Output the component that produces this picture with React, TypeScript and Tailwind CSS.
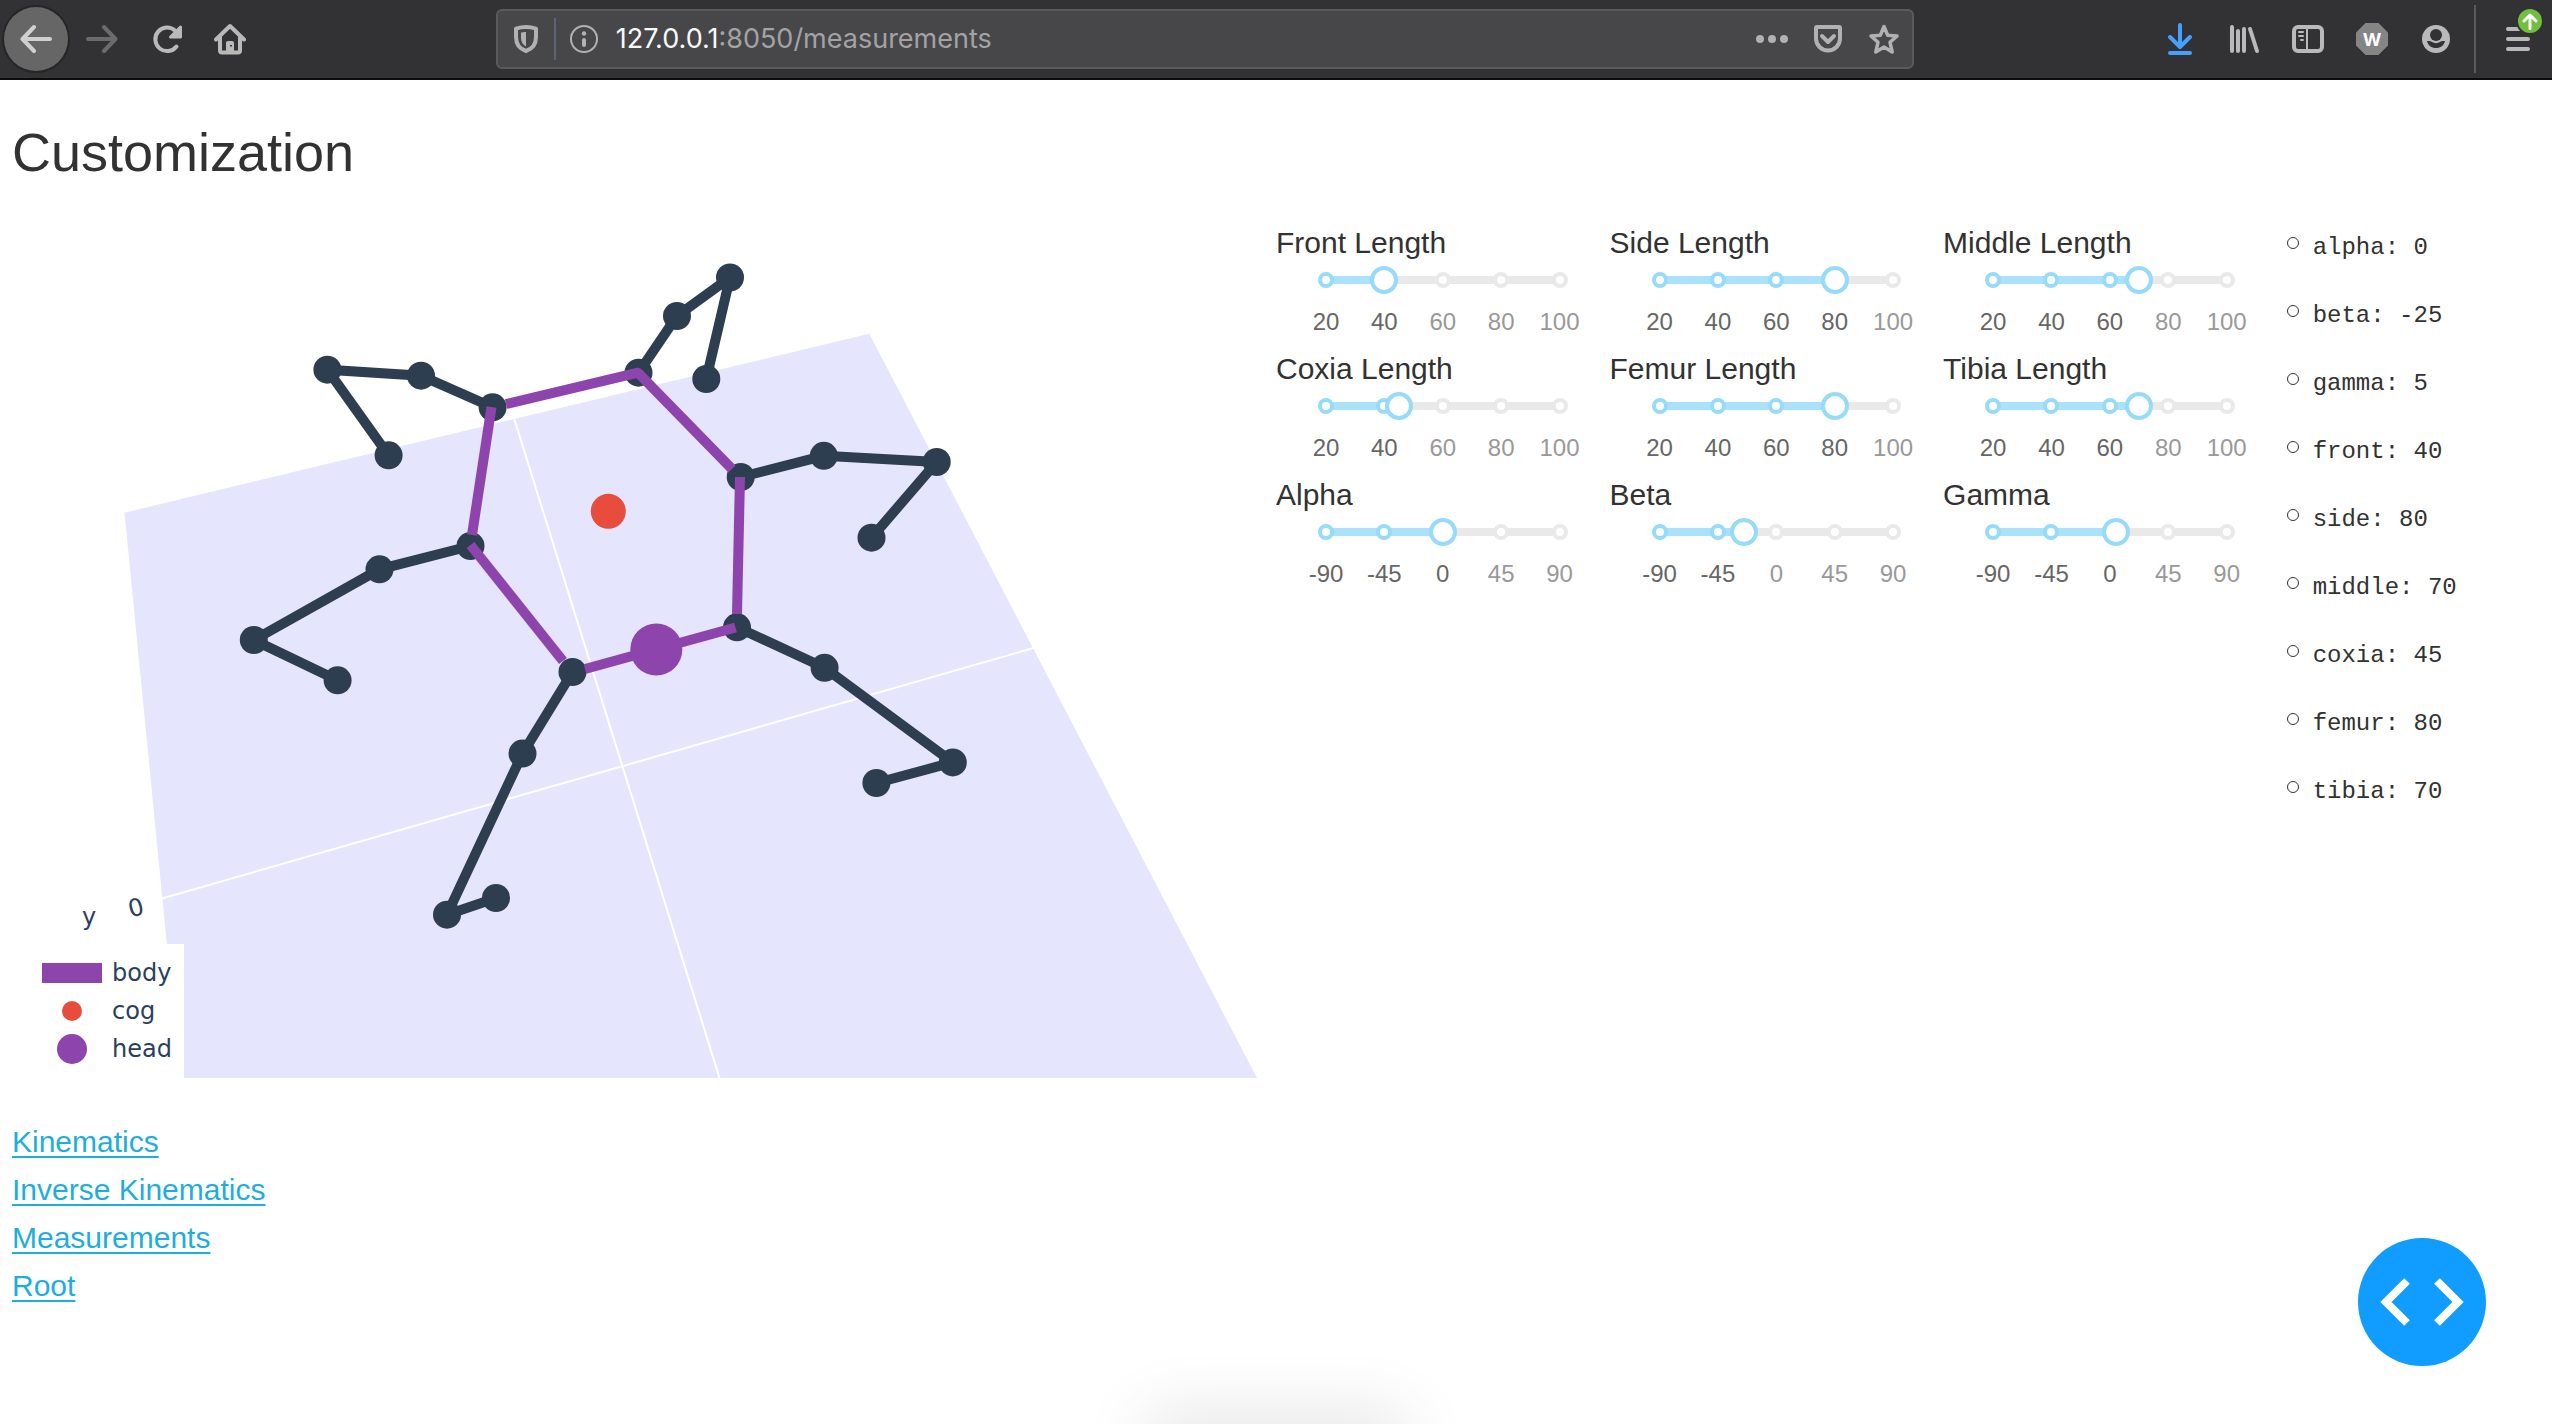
import { useState } from "react";
import type { ReactNode } from "react";

type Point = [number, number];

const NAVY = "#2c3e50";
const PURPLE = "#8e44ad";

function Icon({ children }: { children: ReactNode }) {
  return (
    <svg
      viewBox="0 0 32 32"
      className="size-8 shrink-0"
      fill="none"
      stroke="currentColor"
      strokeWidth={4}
      strokeLinecap="round"
      strokeLinejoin="round"
      aria-hidden="true"
    >
      {children}
    </svg>
  );
}

function ToolButton({ label, children, className = "" }: { label: string; children: ReactNode; className?: string }) {
  return (
    <button type="button" aria-label={label} className={`flex size-16 shrink-0 items-center justify-center ${className}`}>
      <Icon>{children}</Icon>
    </button>
  );
}

function Toolbar() {
  return (
    <header className="flex h-20 items-center border-b-2 border-[#0c0c0d] bg-[#323234] pr-0.5 pl-1 text-[#b9b9ba]">
      <nav aria-label="Browser" className="flex items-center gap-0.5">
        <ToolButton label="Back" className="rounded-full bg-[#666667] text-[#d0d0d0] ring-2 ring-[#262627]">
          <path d="M30 16H3M14 4 2.500 16 14 28" />
        </ToolButton>
        <ToolButton label="Forward" className="text-[#6b6b6d]">
          <path d="M2 16h27M18 4l11.500 12L18 28" />
        </ToolButton>
        <ToolButton label="Reload">
          <path d="M24.500 23.500A11.800 11.800 0 1 1 23 7.500" />
          <path d="M28.500 4v10H18.500z" fill="currentColor" strokeWidth={3} />
        </ToolButton>
        <ToolButton label="Home" className="-ml-1">
          <path d="M2 16.500 16 3l14 13.500" />
          <path d="M6 14v13.500a2 2 0 0 0 2 2h16a2 2 0 0 0 2-2V14" />
          <path d="M12 29V20a2 2 0 0 1 2-2h4a2 2 0 0 1 2 2v9z" fill="currentColor" stroke="none" />
          <path d="M17 22v1.500" stroke="#323234" strokeWidth={2} strokeLinecap="butt" />
        </ToolButton>
      </nav>

      <div className="flex-1" />
      <div className="flex h-15 flex-[6] items-center rounded-md border-2 border-[#5a5a5c] bg-[#474749] pr-3 text-[#b1b1b3]">
        <button type="button" aria-label="Tracking protection" className="ml-3">
          <Icon>
            <path d="M16 4c4 0 7 .6 10 1.600V14c0 8-4 12-10 14C10 26 6 22 6 14V5.600C9 4.600 12 4 16 4z" />
            <path d="M16 9c-2 0-4 .3-5 .6V15c0 4 2 7 5 8.500z" fill="currentColor" stroke="none" />
          </Icon>
        </button>
        <span className="ml-3 h-[42px] w-0.5 bg-[#5d6270]" />
        <button type="button" aria-label="Site information" className="ml-3">
          <Icon>
            <circle cx="16" cy="16" r="13" strokeWidth={2} />
            <circle cx="16" cy="10.500" r="2.200" fill="currentColor" stroke="none" />
            <path d="M16 17v5" />
          </Icon>
        </button>
        <div
          role="textbox"
          aria-label="Address"
          contentEditable
          suppressContentEditableWarning
          className="ml-4 flex-1 font-['Inter',sans-serif] text-[27px] leading-10 whitespace-nowrap text-[#a3a3a5] outline-none"
        >
          <span className="text-[#f9f9fa]">127.0.0.1</span>:8050/measurements
        </div>
        <div className="flex items-center gap-6">
          <button type="button" aria-label="Page actions">
            <Icon>
              <g fill="currentColor" stroke="none">
                <circle cx="4" cy="16" r="4" />
                <circle cx="16" cy="16" r="4" />
                <circle cx="28" cy="16" r="4" />
              </g>
            </Icon>
          </button>
          <button type="button" aria-label="Save to Pocket">
            <Icon>
              <path d="M5 4h22a1 1 0 0 1 1 1v10.500a12 12 0 0 1-24 0V5a1 1 0 0 1 1-1z" />
              <path d="m10 13 6 6 6-6" />
            </Icon>
          </button>
          <button type="button" aria-label="Bookmark">
            <Icon>
              <path
                d="m16 3.500 3.700 8.700 9.300.8-7 6.300 2.200 9.700L16 24l-8.200 5L10 19.300 3 13l9.300-.8z"
                strokeWidth={3.5}
              />
            </Icon>
          </button>
        </div>
      </div>
      <div className="flex-1" />

      <div className="flex items-center">
        <ToolButton label="Downloads" className="text-[#45a1ff]">
          <path d="M16 2v22M6 14l10 10 10-10M6 30h20" />
        </ToolButton>
        <ToolButton label="Library">
          <path d="M4 4v24M10 8v20M16 6v22M22 6l7 22" />
        </ToolButton>
        <ToolButton label="Sidebar">
          <rect x="2" y="4" width="28" height="24" rx="4" />
          <path d="M15 4v24M7 9h4M7 13h4M9 17h2" strokeWidth={2} />
        </ToolButton>
        <ToolButton label="Wappalyzer">
          <path d="M9.500 0h13L32 9.500v13L22.500 32h-13L0 22.500v-13z" fill="#858585" stroke="none" />
          <text
            x="16"
            y="23"
            textAnchor="middle"
            fill="#fff"
            stroke="none"
            className="font-['Inter',sans-serif] text-[18px] font-bold"
          >
            W
          </text>
        </ToolButton>
        <ToolButton label="Account">
          <circle cx="16" cy="16" r="14" fill="currentColor" stroke="none" />
          <g fill="#323234" stroke="none">
            <circle cx="16" cy="12" r="6" />
            <path d="M7 18c2.500-.3 3.500 0 5 1 2.500 1.500 5.500 1.500 8 0 1.500-1 2.500-1.300 5-1-1 4.500-4.500 7-9 7s-8-2.500-9-7z" />
          </g>
        </ToolButton>
        <span className="mr-2.5 ml-1.5 h-[68px] w-0.5 bg-[#5a5a5c]" />
        <div className="relative">
          <ToolButton label="Menu">
            <path d="M6 6h20M6 16h20M6 26h20" />
          </ToolButton>
          <svg viewBox="0 0 28 28" className="absolute top-0 right-1.5 size-7" aria-hidden="true">
            <circle cx="14" cy="14" r="13" fill="#70bf3f" stroke="#323234" strokeWidth={2} />
            <path
              d="M14 21.500V8.500M8 14l6-6 6 6"
              fill="none"
              stroke="#fff"
              strokeWidth={3}
              strokeLinecap="round"
              strokeLinejoin="round"
            />
          </svg>
        </div>
      </div>
    </header>
  );
}

const legs: Point[][] = [
  [[492.6, 407.3], [421, 375.7], [327.4, 369.7], [388.6, 455.3]],
  [[638.5, 372.7], [677, 316], [730, 277.5], [706.3, 379]],
  [[740.7, 477], [823.8, 455.8], [936.7, 462], [871.5, 537.7]],
  [[737, 627.3], [824.6, 667.8], [952.8, 762.4], [876.4, 783]],
  [[572.5, 672], [522.5, 753.6], [447, 914.7], [496, 898]],
  [[470.5, 546], [379.5, 569.3], [253.8, 640], [337.6, 680.3]],
];

const joinPoints = (pts: Point[]) => pts.map((p) => p.join(",")).join(" ");

function HexapodPlot() {
  return (
    <figure className="relative -ml-3 w-[calc(50%+12px)]">
      <svg viewBox="0 219 1276 859" className="block w-full" role="img" aria-label="Hexapod model">
        <polygon points="124.500,512.700 869.300,333.800 1257,1078 180,1078" fill="#e5e5fe" />
        <path d="M514.400 419.300 719.500 1078M162 898.500 1033.600 648" stroke="#fff" strokeWidth={2} fill="none" />
        <g stroke={NAVY} fill="none" strokeWidth={10}>
          {legs.map((leg, i) => (
            <polyline key={i} points={joinPoints(leg)} />
          ))}
        </g>
        <g fill={NAVY}>
          {legs.flatMap((leg, i) => leg.map(([x, y], j) => <circle key={`${i}-${j}`} cx={x} cy={y} r={14} />))}
        </g>
        <g stroke={PURPLE} fill="none" strokeWidth={10}>
          <path d="M472 535 491.500 407" />
          <path d="M506 404 638 372.700 732 469" strokeLinejoin="round" />
          <path d="M740 477 737 614" />
          <path d="M585 669 735.500 627.500" />
          <path d="M470.500 545 563 661" />
        </g>
        <circle cx="656.300" cy="649.500" r="26" fill={PURPLE} />
        <circle cx="608.300" cy="511.300" r="17.500" fill="#e74c3c" />
        <g fill="#2a3f5f" className="font-['DejaVu_Sans',sans-serif] text-[24px]">
          <text x="82" y="925">y</text>
          <text x="136" y="908" textAnchor="middle" dominantBaseline="central" transform="rotate(-14 136 908)">
            0
          </text>
        </g>
      </svg>
      <ul className="absolute bottom-0 left-0 flex h-[134px] w-[184px] flex-col bg-white pt-2.5 font-['DejaVu_Sans',sans-serif] text-[24px] leading-[38px] text-[#2a3f5f]">
        <li className="flex items-center gap-2.5 pl-[42px]">
          <span className="h-5 w-15 bg-[#8e44ad]" />
          body
        </li>
        <li className="flex items-center gap-2.5 pl-[42px]">
          <span className="flex w-15 justify-center">
            <span className="size-5 rounded-full bg-[#e74c3c]" />
          </span>
          cog
        </li>
        <li className="flex items-center gap-2.5 pl-[42px]">
          <span className="flex w-15 justify-center">
            <span className="size-[30px] rounded-full bg-[#8e44ad]" />
          </span>
          head
        </li>
      </ul>
    </figure>
  );
}

type Dimension = { key: string; label: string; value: number; marks: number[] };

const LENGTHS = [20, 40, 60, 80, 100];
const ANGLES = [-90, -45, 0, 45, 90];

const dimensions: Dimension[] = [
  { key: "front", label: "Front Length", value: 40, marks: LENGTHS },
  { key: "side", label: "Side Length", value: 80, marks: LENGTHS },
  { key: "middle", label: "Middle Length", value: 70, marks: LENGTHS },
  { key: "coxia", label: "Coxia Length", value: 45, marks: LENGTHS },
  { key: "femur", label: "Femur Length", value: 80, marks: LENGTHS },
  { key: "tibia", label: "Tibia Length", value: 70, marks: LENGTHS },
  { key: "alpha", label: "Alpha", value: 0, marks: ANGLES },
  { key: "beta", label: "Beta", value: -25, marks: ANGLES },
  { key: "gamma", label: "Gamma", value: 5, marks: ANGLES },
];

const readoutOrder = ["alpha", "beta", "gamma", "front", "side", "middle", "coxia", "femur", "tibia"];

function Slider({ item, value, onChange }: { item: Dimension; value: number; onChange: (v: number) => void }) {
  const min = item.marks[0];
  const max = item.marks[item.marks.length - 1];
  const percent = (v: number) => `${((v - min) / (max - min)) * 100}%`;
  return (
    <div className="h-[126px]">
      <label htmlFor={item.key} className="block text-[30px] leading-12">
        {item.label}
      </label>
      <div className="relative mx-[50px] h-7">
        <div className="absolute inset-x-0 top-[9px] h-2 rounded bg-[#e9e9e9]" />
        <div className="absolute left-0 top-[9px] h-2 rounded bg-[#abe2fb]" style={{ width: percent(value) }} />
        {item.marks.map((m) => (
          <span
            key={m}
            className={`absolute top-[5px] size-4 -translate-x-1/2 rounded-full border-4 bg-white ${
              m <= value ? "border-[#96dbfa]" : "border-[#e9e9e9]"
            }`}
            style={{ left: percent(m) }}
          />
        ))}
        {item.marks.map((m) => (
          <span
            key={`label-${m}`}
            className={`absolute top-[41px] -translate-x-1/2 text-[24px] leading-7 ${
              m <= value ? "text-[#666]" : "text-[#999]"
            }`}
            style={{ left: percent(m) }}
          >
            {m}
          </span>
        ))}
        <input
          id={item.key}
          type="range"
          min={min}
          max={max}
          value={value}
          onChange={(e) => onChange(Number(e.target.value))}
          className="absolute -left-3.5 -top-px h-7 w-[calc(100%+28px)] cursor-pointer appearance-none bg-transparent [&::-webkit-slider-thumb]:size-7 [&::-webkit-slider-thumb]:appearance-none [&::-webkit-slider-thumb]:rounded-full [&::-webkit-slider-thumb]:border-4 [&::-webkit-slider-thumb]:border-solid [&::-webkit-slider-thumb]:border-[#96dbfa] [&::-webkit-slider-thumb]:bg-white"
        />
      </div>
    </div>
  );
}

const links = [
  { label: "Kinematics", href: "#kinematics" },
  { label: "Inverse Kinematics", href: "#inverse-kinematics" },
  { label: "Measurements", href: "#measurements" },
  { label: "Root", href: "#root" },
];

export default function App() {
  const [values, setValues] = useState<Record<string, number>>(() =>
    Object.fromEntries(dimensions.map((d) => [d.key, d.value])),
  );

  return (
    <div className="relative min-h-screen overflow-hidden bg-white font-['Liberation_Sans',sans-serif] text-[#323232]">
      <Toolbar />
      <main className="px-3 pt-9">
        <h1 className="text-[54px] leading-[72px]">Customization</h1>
        <div className="mt-[31px] flex items-start">
          <HexapodPlot />
          <div className="grid w-1/2 grid-cols-[19fr_5fr] items-start">
            <div className="grid grid-cols-3">
              {dimensions.map((d) => (
                <Slider
                  key={d.key}
                  item={d}
                  value={values[d.key]}
                  onChange={(v) => setValues((prev) => ({ ...prev, [d.key]: v }))}
                />
              ))}
            </div>
            <ul className="flex flex-col gap-[34px] pt-3 pl-2.5 font-['Liberation_Mono',monospace] text-[24px] leading-[34px]">
              {readoutOrder.map((key) => (
                <li key={key} className="flex items-start gap-3.5">
                  <span className="mt-1.5 size-3 rounded-full border border-[#323232]" />
                  {key}: {values[key]}
                </li>
              ))}
            </ul>
          </div>
        </div>
        <nav aria-label="Pages" className="mt-10 flex flex-col items-start text-[30px] leading-12">
          {links.map((l) => (
            <a key={l.label} href={l.href} className="text-[#1eaedb] underline decoration-2 underline-offset-4">
              {l.label}
            </a>
          ))}
        </nav>
      </main>

      <button
        type="button"
        aria-label="Debug menu"
        className="fixed right-[66px] bottom-[58px] flex size-32 items-center justify-center rounded-full bg-[#119dff]"
      >
        <svg viewBox="0 0 84 48" className="w-[84px]" fill="none" stroke="#fff" strokeWidth={8} aria-hidden="true">
          <path d="M27 3 6 24l21 21M57 3l21 21-21 21" />
        </svg>
      </button>
      <div className="pointer-events-none fixed inset-x-0 -bottom-10 mx-auto h-10 w-60 shadow-[0_0_70px_8px_rgba(0,0,0,0.12)]" />
    </div>
  );
}
